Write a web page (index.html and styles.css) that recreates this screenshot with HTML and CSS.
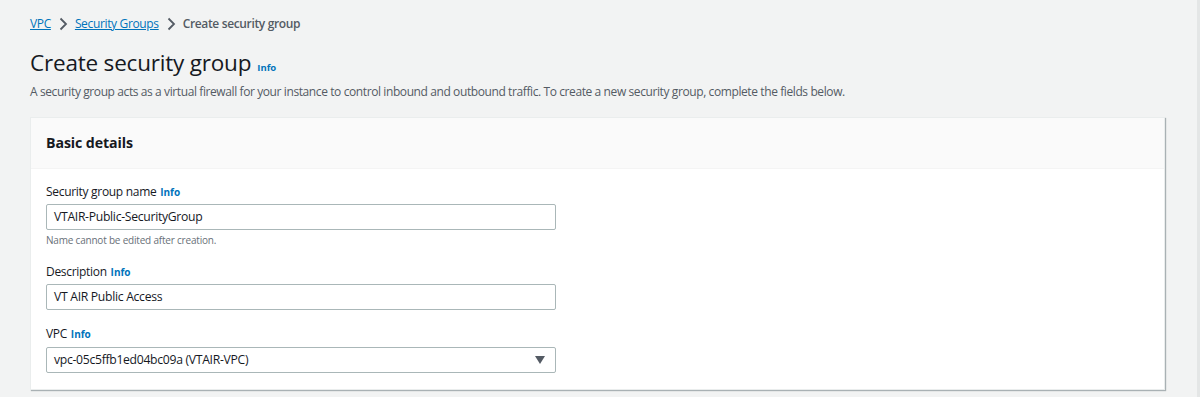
FILE: index.html
```html
<!DOCTYPE html>
<html lang="en">
<head>
    <meta charset="UTF-8">
    <title>Create security group</title>
    <link rel="stylesheet" href="styles.css">
</head>
<body>
    <nav class="crumbs">
        <a href="#">VPC</a>
        <span class="sep">
            <svg width="16" height="16" viewBox="0 0 16 16"><path d="M5.5 2.5 11 8l-5.5 5.5" fill="none" stroke="#545b64" stroke-width="1.8"/></svg>
        </span>
        <a href="#">Security Groups</a>
        <span class="sep">
            <svg width="16" height="16" viewBox="0 0 16 16"><path d="M5.5 2.5 11 8l-5.5 5.5" fill="none" stroke="#545b64" stroke-width="1.8"/></svg>
        </span>
        <span class="current">Create security group</span>
    </nav>

    <header class="page-head">
        <h1>Create security group <a href="#" class="info">Info</a></h1>
        <p>A security group acts as a virtual firewall for your instance to control inbound and outbound traffic. To create a new security group, complete the fields below.</p>
    </header>

    <section class="card">
        <div class="card-head">
            <h2>Basic details</h2>
        </div>
        <div class="card-body">
            <div class="field">
                <label>Security group name <a href="#" class="info">Info</a></label>
                <div class="input">VTAIR-Public-SecurityGroup</div>
                <div class="hint">Name cannot be edited after creation.</div>
            </div>
            <div class="field">
                <label>Description <a href="#" class="info">Info</a></label>
                <div class="input">VT AIR Public Access</div>
            </div>
            <div class="field field-last">
                <label>VPC <a href="#" class="info">Info</a></label>
                <div class="input select">
                    <span>vpc-05c5ffb1ed04bc09a (VTAIR-VPC)</span>
                    <svg width="12" height="10" viewBox="0 0 12 10"><path d="M1 1h10L6 9z" fill="#545b64"/></svg>
                </div>
            </div>
        </div>
    </section>
</body>
</html>
```

FILE: styles.css
```css
* {box-sizing: border-box; margin: 0; padding: 0;}
body {
    background: #f2f3f3;
    color: #16191f;
    font-family: 'Open Sans', 'Noto Sans', sans-serif;
    font-size: 12px;
    line-height: 20px;
    letter-spacing: -0.3px;
    padding: 14px 32px 0 30px;
    height: 397px;
    overflow: hidden;
    border-right: 3px solid #e4e6e6;
}
a {color: #0073bb;}

.crumbs {
    display: flex;
    align-items: center;
    height: 20px;
    color: #545b64;
    font-size: 12px;
    letter-spacing: -0.35px;
}
.crumbs .sep {display: flex; margin: 0 4px;}
.crumbs .current {font-weight: 600;}

.page-head {margin-top: 14px;}
h1 {
    font-size: 22.5px;
    font-weight: 400;
    line-height: 30px;
    letter-spacing: -0.2px;
    display: flex;
    align-items: baseline;
}
.info {
    font-size: 9.5px;
    font-weight: 700;
    text-decoration: none;
    margin-left: 6px;
    letter-spacing: 0;
}
.page-head p {
    color: #545b64;
    font-size: 12px;
    line-height: 18px;
    letter-spacing: -0.4px;
}

.card {
    margin-top: 16px;
    background: #fff;
    border: 1px solid #eaeded;
    box-shadow: 1px 1px 1px 0 rgba(0, 28, 36, 0.3);
}
.card-head {
    background: #fafafa;
    height: 51px;
    padding: 0 15px;
    display: flex;
    align-items: center;
    border-bottom: 1px solid #f4f4f4;
}
h2 {font-size: 14.2px; font-weight: 700; letter-spacing: -0.1px;}

.card-body {padding: 13px 15px 16px;}
.field {margin-bottom: 14px;}
.field-last {margin-bottom: 0;}
.field label {display: block; font-size: 12px;}
.field label .info {margin-left: 1px; font-size: 10px;}
.input {
    margin-top: 2px;
    width: 510px;
    height: 26px;
    border: 1px solid #aab7b8;
    border-radius: 2px;
    padding: 0 7px;
    display: flex;
    align-items: center;
    font-size: 12.2px;
}
.field-last .input {margin-top: 3px;}
.select {justify-content: space-between;}
.select svg {margin-right: 2px;}
.hint {
    font-size: 10px;
    color: #687078;
    line-height: 16px;
    margin-top: 2px;
    letter-spacing: -0.2px;
}
```
